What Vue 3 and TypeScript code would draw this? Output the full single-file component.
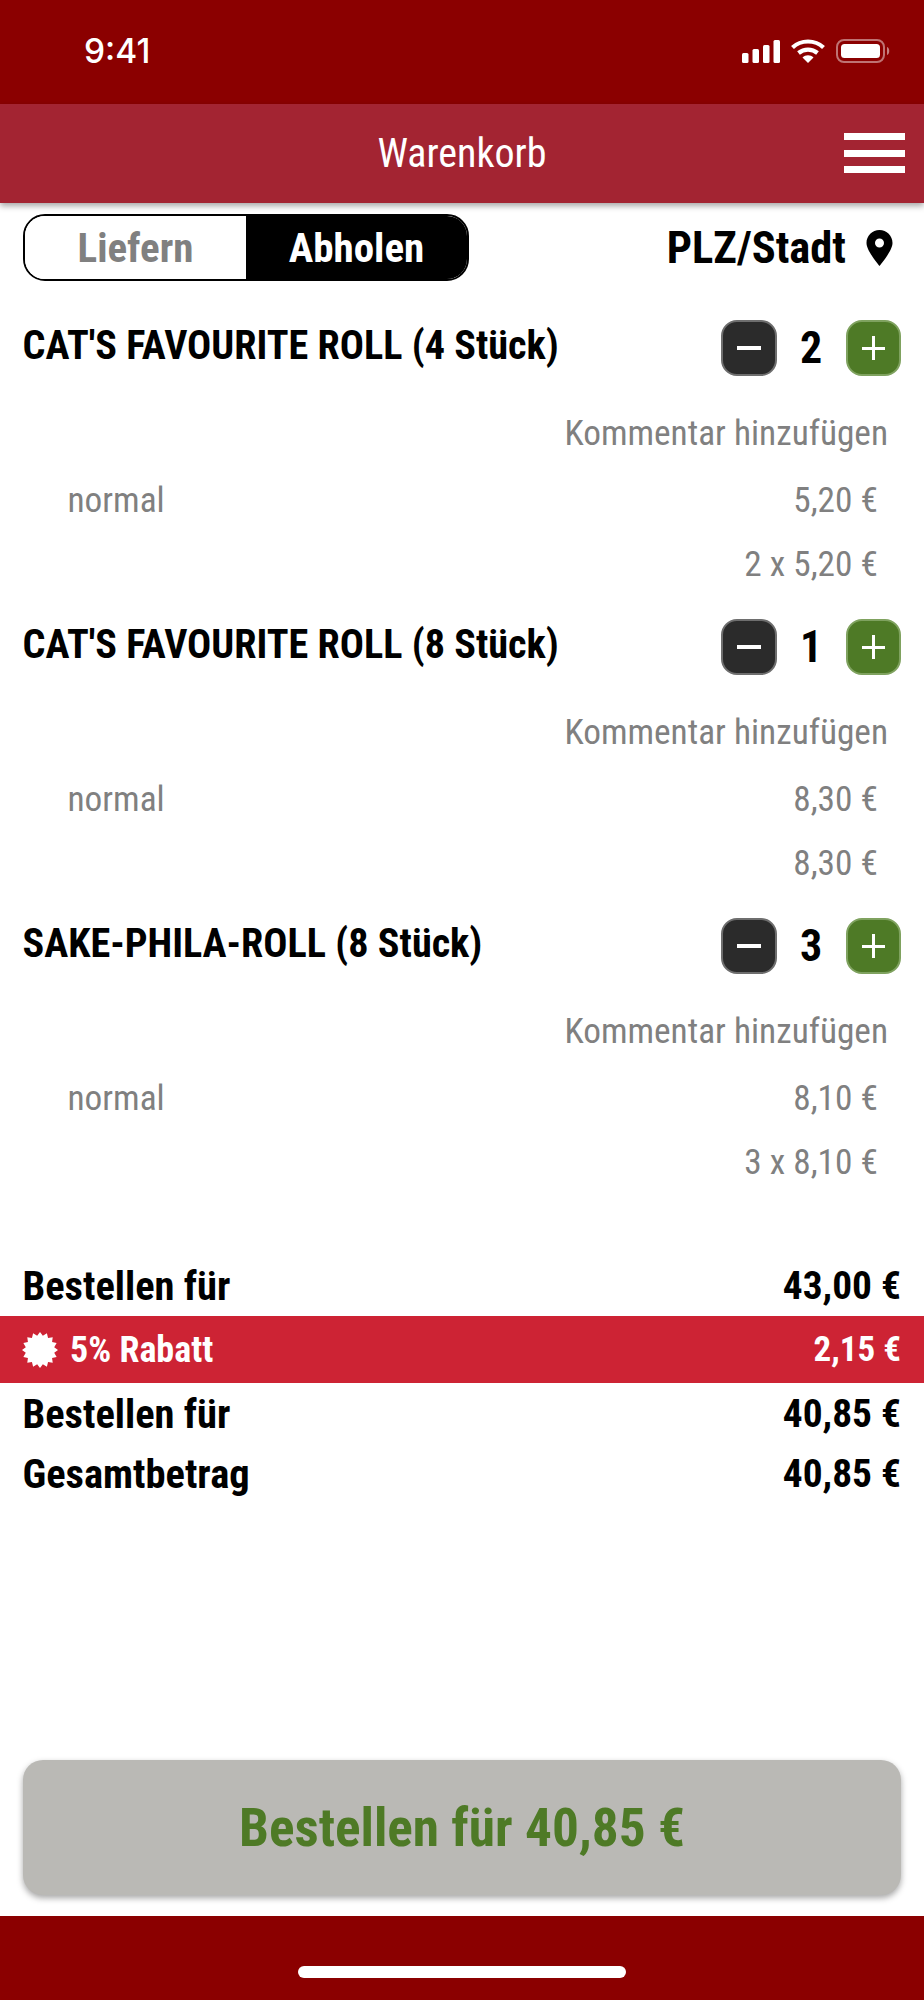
<script setup lang="ts">
interface Item { name: string; qty: number; price: string; line: string }
const items: Item[] = [
  { name: "CAT'S FAVOURITE ROLL (4 Stück)", qty: 2, price: '5,20 €', line: '2 x 5,20 €' },
  { name: "CAT'S FAVOURITE ROLL (8 Stück)", qty: 1, price: '8,30 €', line: '8,30 €' },
  { name: 'SAKE-PHILA-ROLL (8 Stück)', qty: 3, price: '8,10 €', line: '3 x 8,10 €' },
]
const burst = (() => {
  const pts: string[] = []
  for (let i = 0; i < 32; i++) {
    const r = i % 2 ? 14.5 : 18
    const a = (i * Math.PI) / 16
    pts.push(`${(18 + r * Math.sin(a)).toFixed(2)},${(18 - r * Math.cos(a)).toFixed(2)}`)
  }
  return pts.join(' ')
})()
</script>

<template>
  <div class="page">
    <div class="status">
      <span class="time">9:41</span>
      <div class="status-icons">
        <svg width="38" height="23" viewBox="0 0 38 23"><g fill="#fff"><rect x="0" y="13" width="6.500" height="10" rx="1.500"/><rect x="10.500" y="9" width="6.500" height="14" rx="1.500"/><rect x="21" y="5" width="6.500" height="18" rx="1.500"/><rect x="31.500" y="0" width="6.500" height="23" rx="1.500"/></g></svg>
        <svg width="34" height="24" viewBox="0 0 34 24"><path d="M1.500 8.500 C10 0.500 24 0.500 32.500 8.500" fill="none" stroke="#fff" stroke-width="4.200"/><path d="M7.500 14 C13 9.500 21 9.500 26.500 14" fill="none" stroke="#fff" stroke-width="4.200"/><path d="M11.500 18.500 L17 24 L22.500 18.500 C19.500 15.500 14.500 15.500 11.500 18.500 Z" fill="#fff"/></svg>
        <svg width="55" height="24" viewBox="0 0 55 24"><rect x="1" y="1" width="47" height="22" rx="7" fill="none" stroke="#fff" stroke-opacity=".45" stroke-width="2"/><rect x="5" y="5" width="39" height="14" rx="3.500" fill="#fff"/><path d="M51 8 C54 9 54 15 51 16 Z" fill="#fff" fill-opacity=".5"/></svg>
      </div>
    </div>

    <header class="header">
      <span class="title">Warenkorb</span>
      <div class="burger"><i></i><i></i><i></i></div>
    </header>

    <main class="content">
      <div class="modes">
        <div class="toggle">
          <span class="seg off">Liefern</span>
          <span class="seg on">Abholen</span>
        </div>
        <div class="place">
          <span>PLZ/Stadt</span>
          <svg width="27" height="36" viewBox="0 0 26 36"><path fill-rule="evenodd" d="M13 0 C5.800 0 0 5.800 0 13 C0 21 13 36 13 36 C13 36 26 21 26 13 C26 5.800 20.200 0 13 0 Z M13 8.500 A4.500 4.500 0 1 1 13 17.500 A4.500 4.500 0 1 1 13 8.500 Z" fill="#000"/></svg>
        </div>
      </div>

      <section v-for="item in items" :key="item.name" class="item">
        <div class="item-head">
          <span class="name">{{ item.name }}</span>
          <div class="stepper">
            <span class="step minus"><i class="h"></i></span>
            <span class="qty">{{ item.qty }}</span>
            <span class="step plus"><i class="h"></i><i class="v"></i></span>
          </div>
        </div>
        <div class="comment">Kommentar hinzufügen</div>
        <div class="variant"><span>normal</span><span>{{ item.price }}</span></div>
        <div class="linetotal">{{ item.line }}</div>
      </section>

      <div class="sum first"><span>Bestellen für</span><span class="val">43,00 €</span></div>
      <div class="discount">
        <span class="dleft">
          <svg width="36" height="36" viewBox="0 0 36 36"><polygon :points="burst" fill="#fff"/></svg>
          5% Rabatt
        </span>
        <span class="dval">2,15 €</span>
      </div>
      <div class="sum after"><span>Bestellen für</span><span class="val">40,85 €</span></div>
      <div class="sum grand"><span>Gesamtbetrag</span><span class="val">40,85 €</span></div>

      <div class="spacer"></div>
      <div class="order">Bestellen für 40,85 €</div>
    </main>

    <footer class="footer"><div class="home"></div></footer>
  </div>
</template>

<style>
html, body { margin: 0; background: #fff; }
</style>

<style scoped>
.page {
  width: 924px;
  height: 2000px;
  display: flex;
  flex-direction: column;
  font-family: "Roboto", "Liberation Sans", sans-serif;
  font-stretch: condensed;
  color: #000;
  overflow: hidden;
}
.status {
  height: 104px;
  flex: none;
  background: #8b0000;
  display: flex;
  justify-content: space-between;
  align-items: flex-start;
  padding: 33px 34px 0 84px;
  box-sizing: border-box;
}
.time {
  font-family: "Inter", "Liberation Sans", sans-serif;
  font-stretch: normal;
  font-size: 33.500px;
  line-height: 36px;
  font-weight: 500;
  color: #fff;
}
.status-icons { display: flex; align-items: center; gap: 11px; margin-top: 6px; margin-right: -1px; }
.header {
  height: 99px;
  flex: none;
  background: #a32432;
  box-shadow: 0 3px 6px rgba(0, 0, 0, .35);
  position: relative;
  display: flex;
  align-items: center;
  justify-content: center;
  z-index: 1;
}
.title { color: #fff; font-size: 40px; font-weight: 400; }
.burger {
  position: absolute;
  right: 19px;
  top: 29px;
  width: 61px;
  display: flex;
  flex-direction: column;
  gap: 9.500px;
}
.burger i { display: block; height: 7px; background: #fff; }
.content { flex: 1; display: flex; flex-direction: column; min-height: 0; }
.modes {
  display: flex;
  justify-content: space-between;
  align-items: center;
  padding: 11px 31px 0 23px;
}
.toggle {
  width: 446px;
  height: 67px;
  box-sizing: border-box;
  border: 2px solid #000;
  border-radius: 22px;
  overflow: hidden;
  display: flex;
}
.seg {
  flex: 1;
  display: flex;
  align-items: center;
  justify-content: center;
  font-size: 41px;
  font-weight: 700;
}
.off { color: #808080; background: #fff; }
.on { color: #fff; background: #000; }
.place { display: flex; align-items: center; gap: 20px; font-size: 44.500px; font-weight: 700; }
.item { padding: 0 23px 0 22.500px; height: 299px; box-sizing: border-box; display: flex; flex-direction: column; }
.item-head { display: flex; justify-content: space-between; align-items: center; height: 56px; margin-top: 39px; }
.name { font-size: 40.200px; font-weight: 700; margin-top: -5px; }
.stepper { display: flex; align-items: center; }
.step {
  width: 55.500px;
  height: 56px;
  box-sizing: border-box;
  border-radius: 16px;
  border: 2px solid;
  position: relative;
}
.step i { position: absolute; background: #fff; }
.h { left: 14px; right: 14px; top: 24px; height: 4px; }
.v { top: 14px; bottom: 14px; left: 24.250px; width: 3px; }
.plus .h { top: 24.500px; height: 3px; }
.minus { background: #2b2b2b; border-color: #6e6e6e; }
.plus { background: #4e7a26; border-color: #7fa25f; }
.qty { width: 69px; text-align: center; font-size: 44px; font-weight: 700; }
.comment, .variant, .linetotal { color: #808080; font-size: 35.300px; }
.comment { text-align: right; padding-right: 13px; margin-top: 35px; line-height: 44px; }
.variant { display: flex; justify-content: space-between; padding: 0 23px 0 45px; margin-top: 23px; line-height: 44px; }
.linetotal { text-align: right; padding-right: 23px; margin-top: 20px; line-height: 44px; }
.sum {
  display: flex;
  justify-content: space-between;
  padding: 0 23px 0 22.500px;
  font-size: 40.500px;
  font-weight: 700;
  line-height: 46px;
}
.val { font-size: 39.400px; }
.first { margin-top: 85px; }
.discount {
  display: flex;
  justify-content: space-between;
  align-items: center;
  height: 67px;
  margin-top: 7px;
  padding: 0 23px 0 22px;
  background: #cd2334;
  color: #fff;
  font-size: 36px;
  font-weight: 700;
}
.dleft { display: flex; align-items: center; gap: 12px; }
.dval { font-size: 35px; }
.after { margin-top: 8px; }
.grand { margin-top: 14px; }
.spacer { flex: 1; }
.order {
  margin: 0 23px 21px;
  height: 135px;
  flex: none;
  background: #bab9b5;
  border-radius: 20px;
  box-shadow: 0 3px 6px rgba(0, 0, 0, .35);
  color: #4e7a26;
  font-size: 53.300px;
  font-weight: 700;
  display: flex;
  align-items: center;
  justify-content: center;
}
.footer {
  height: 84px;
  flex: none;
  background: #8b0000;
  display: flex;
  justify-content: center;
  padding-top: 50px;
  box-sizing: border-box;
}
.home { width: 328px; height: 12px; border-radius: 6px; background: #fff; }
</style>
